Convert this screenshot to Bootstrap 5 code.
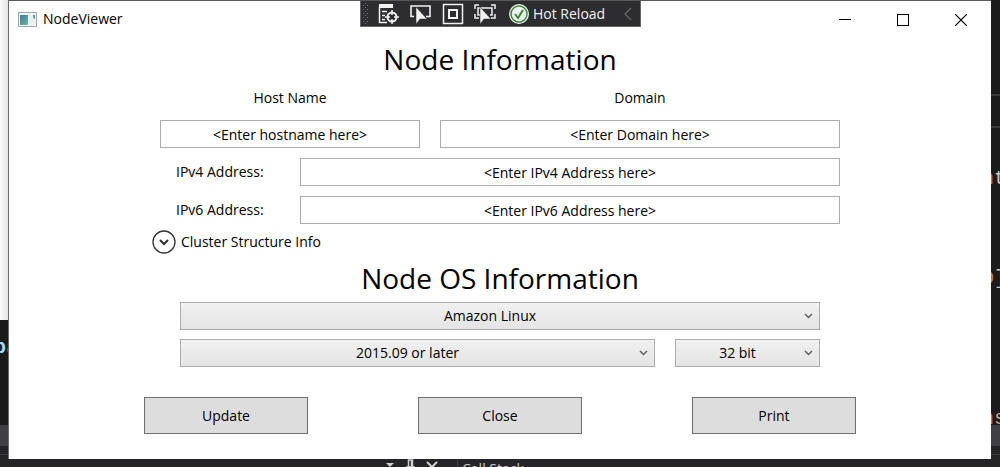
<!DOCTYPE html>
<html lang="en">
<head>
<meta charset="utf-8">
<meta name="viewport" content="width=device-width, initial-scale=1">
<title>NodeViewer</title>
<link rel="stylesheet" href="https://cdn.jsdelivr.net/npm/bootstrap@5.3.0/dist/css/bootstrap.min.css">
<style>
  body { font-family: "Open Sans", "Noto Sans", sans-serif; font-size: 14px; line-height: 20px; color: #000; background: #1b1b1c; }
  .desk { min-height: 100vh; padding: 0 9px 8px; }

  /* editor that shows around the window */
  .ide { inset: 0; font: 20px/24px "Liberation Mono", monospace; }
  .ide-edge { top: 0; bottom: 0; width: 12px; }
  .ide-edge i, .ide-edge b { position: absolute; font-style: normal; white-space: pre; }
  .ide-page { height: 320px; background: linear-gradient(90deg, #fafafa, #d8d8d8); }
  .ide-rule { left: 0; right: 0; height: 2px; background: #3a3a3b; }
  .ide-tabs { left: 0; right: 0; bottom: 21px; height: 21px; background: #3f3f44; }
  .ide-panel { left: 0; right: 0; bottom: 0; height: 21px; background: #252528; }
  .ide-panel::before { content: ""; position: absolute; left: 0; right: 0; top: 8px; border-top: 1px solid #3f3f46; }
  .ide-tools { left: 385px; top: 13px; color: #c8c8c8; font: 14px/20px "Open Sans", sans-serif; }
  .ide-title { border-left: 1px solid #3f3f46; padding-left: 4px; margin-left: 18px; }

  /* application window */
  .app { min-height: calc(100vh - 8px); background: #fff; border-top: 1px solid #59595b; box-shadow: -1px 0 #6b6b6b; }
  .titlebar { height: 36px; padding-left: 9px; padding-right: 1px; gap: 6px; }
  .titlebar .caption { width: 58px; height: 36px; border: 0; background: none; }
  .app h1 { font-size: 28px; line-height: 40px; font-weight: 400; padding-top: 2px; }
  .app h1.heading-os { line-height: 36px; padding: 0 0 6px; }
  .form-area { max-width: 680px; }
  .os-area { max-width: 640px; }
  .action-area { max-width: 712px; padding-top: 30px; }
  .col-label { height: 41px; padding-top: 9px; }
  .gap-field { gap: 10px; }
  .gap-select { gap: 9px; }
  .gap-col { column-gap: 20px; }
  .host-grid { display: grid; grid-template-columns: 13fr 20fr; }
  .addr-label { width: 140px; padding-left: 16px; }
  .field { height: 28px; padding: 0 4px; font-size: 14px; line-height: 20px; color: #000; background: #fff; border: 1px solid #abadb3; border-radius: 0; text-align: center; }
  select.field { appearance: none; padding: 0 20px 0 0; border-color: #acacac; text-align-last: center;
    background: url("data:image/svg+xml,%3Csvg xmlns='http://www.w3.org/2000/svg' width='9' height='6'%3E%3Cpath d='M1 1l3.500 3.500L8 1' fill='none' stroke='%23606060' stroke-width='1.500'/%3E%3C/svg%3E") no-repeat right 6px top 10px, linear-gradient(#f0f0f0, #e5e5e5); }
  .ver-grid { display: grid; grid-template-columns: 475fr 145fr; }
  .expander { max-width: 696px; }
  .expander button { border: 0; background: none; gap: 5px; height: 36px; color: #000; }
  .btn-win { width: 164px; height: 37px; padding: 0; font-size: 14px; line-height: 20px; color: #000; background: #ddd; border: 1px solid #707070; border-radius: 0; }

  /* debug toolbar over the title bar */
  .debugbar { top: 1px; left: 50%; width: 281px; height: 26px; margin-left: -140px; background: #2d2d30; border: 1px solid #66666a; border-top: 0; color: #f1f1f1; }
  .debugbar button { border: 0; padding: 0; background: none; color: inherit; line-height: 20px; }
</style>
</head>
<body>
<div class="desk position-relative overflow-hidden">

  <div class="ide position-absolute overflow-hidden" aria-hidden="true">
    <div class="ide-edge position-absolute start-0 overflow-hidden">
      <div class="ide-page"></div>
      <b style="top:336px;left:-6px;color:#9cdcfe">p</b>
      <b style="top:336px;left:6px;color:#3d62b0">a</b>
    </div>
    <div class="ide-edge position-absolute end-0 overflow-hidden">
      <div class="ide-rule position-absolute" style="top:94px"></div>
      <div class="ide-rule position-absolute" style="top:126px"></div>
      <i style="top:167px;left:-6px;color:#b5714f">n<span style="color:#c8c8c8">t</span></i>
      <i style="top:267px;left:-6px;color:#c08060">D<span style="color:#c8c8c8">]</span></i>
      <i style="top:407px;left:-6px;color:#b5714f">n<span style="color:#d69d85">s</span></i>
    </div>
    <div class="ide-tabs position-absolute"></div>
    <div class="ide-panel position-absolute">
      <div class="ide-tools position-absolute d-flex align-items-start">
        <svg width="54" height="14" fill="none" stroke="#d0d0d0"><path d="M1 4h8L5 8z" fill="#d0d0d0" stroke="none"/><path d="M23.500 8V1h4v7M26.500 1v7M21 8h9" stroke-width="1.500"/><path d="M42 3l10 10M52 3L42 13" stroke-width="2"/></svg>
        <span class="ide-title">Call Stack</span>
      </div>
    </div>
  </div>

  <main class="app position-relative">
    <header class="titlebar d-flex align-items-center">
      <svg width="19" height="15" viewBox="0 0 19 15"><defs><linearGradient id="pane" x2="1" y2="1"><stop stop-color="#3f73a8"/><stop offset="1" stop-color="#6cc08b"/></linearGradient></defs><path d="M.5.500h18v14H.5z" fill="#f5f7f9" stroke="#9aa4ad"/><path d="M2 3h8v10H2z" fill="url(#pane)"/><path d="M11 3h6v10h-6z" fill="#eee"/><path d="M15 3h2v4q-2 0-2-4z" fill="#4f9a93"/></svg>
      <span class="me-auto">NodeViewer</span>
      <div class="d-flex">
        <button class="caption" type="button" aria-label="Minimize"><svg width="12" height="12" shape-rendering="crispEdges"><path d="M0 5.500h12" stroke="#000"/></svg></button>
        <button class="caption" type="button" aria-label="Maximize"><svg width="12" height="12" shape-rendering="crispEdges"><path d="M.5.500h11v11H.5z" fill="none" stroke="#000"/></svg></button>
        <button class="caption" type="button" aria-label="Close window"><svg width="12" height="12"><path d="M0 0l12 12M12 0L0 12" stroke="#000" stroke-width="1.200"/></svg></button>
      </div>
    </header>

    <h1 class="text-center m-0">Node Information</h1>
    <div class="form-area mx-auto d-flex flex-column gap-field">
      <div class="host-grid gap-col text-center">
        <label class="col-label" for="host">Host Name</label>
        <label class="col-label" for="domain">Domain</label>
        <input class="field w-100" id="host" type="text" value="&lt;Enter hostname here&gt;">
        <input class="field w-100" id="domain" type="text" value="&lt;Enter Domain here&gt;">
      </div>
      <div class="d-flex align-items-center">
        <label class="addr-label flex-shrink-0" for="ip4">IPv4 Address:</label>
        <input class="field flex-fill" id="ip4" type="text" value="&lt;Enter IPv4 Address here&gt;">
      </div>
      <div class="d-flex align-items-center">
        <label class="addr-label flex-shrink-0" for="ip6">IPv6 Address:</label>
        <input class="field flex-fill" id="ip6" type="text" value="&lt;Enter IPv6 Address here&gt;">
      </div>
    </div>
    <div class="expander mx-auto">
      <button class="d-flex align-items-center p-0" type="button" aria-expanded="false">
        <svg width="24" height="24" fill="none" stroke="#333"><circle cx="12" cy="12" r="11" stroke-width="1.300"/><path d="M8 10l4 4 4-4" stroke-width="2.200"/></svg>
        Cluster Structure Info
      </button>
    </div>

    <h1 class="heading-os text-center m-0">Node OS Information</h1>
    <div class="os-area mx-auto d-flex flex-column gap-select">
      <select class="field w-100" aria-label="Operating system"><option>Amazon Linux</option></select>
      <div class="ver-grid gap-col">
        <select class="field w-100" aria-label="Version"><option>2015.09 or later</option></select>
        <select class="field w-100" aria-label="Architecture"><option>32 bit</option></select>
      </div>
    </div>
    <div class="action-area mx-auto d-flex justify-content-between">
      <button class="btn btn-win" type="button">Update</button>
      <button class="btn btn-win" type="button">Close</button>
      <button class="btn btn-win" type="button">Print</button>
    </div>
  </main>

  <div class="debugbar position-absolute d-flex align-items-center" role="toolbar" aria-label="Debug tools">
    <svg width="8" height="22" class="me-2"><defs><pattern id="grip" width="4" height="4" patternUnits="userSpaceOnUse"><path d="M0 0h1v1H0zM2 2h1v1H2z" fill="#77777b"/></pattern></defs><path d="M1 0h7v22H1z" fill="url(#grip)"/></svg>
    <button class="d-flex me-2" type="button" aria-label="Live Visual Tree"><svg width="24" height="22" fill="none" stroke="#f1f1f1"><path d="M2 1h14v4H2z" fill="#f1f1f1" stroke="none"/><path d="M2.500 4v16M2 19.500h8M5 8.500h5M5 12.500h3M5 16.500h3" stroke-width="1.500"/><circle cx="15" cy="14" r="4.500" stroke-width="2"/><path d="M15 7v5M15 16v5M8 14h5M17 14h5" stroke-width="1.500"/></svg></button>
    <button class="d-flex me-2" type="button" aria-label="Select Element"><svg width="24" height="22" fill="none" stroke="#f1f1f1"><path d="M5 13.500H2V3h19v10.500h-4" stroke-width="1.600"/><path d="M7 4v17l4-5h7z" fill="#f1f1f1" stroke="#2d2d30" stroke-width=".5"/></svg></button>
    <button class="d-flex me-2" type="button" aria-label="Display Layout Adorners"><svg width="24" height="22" fill="none" stroke="#f1f1f1"><path d="M2.500 1.500h19v19h-19z" stroke-width="1.500"/><path d="M8 7h8v8H8z" stroke-width="2"/></svg></button>
    <button class="d-flex me-2" type="button" aria-label="Track Focused Element"><svg width="24" height="22" fill="none" stroke="#f1f1f1"><path d="M2 6V2h4M18 2h4v4M2 11v4h4M18 15h4v-4M7 12H5V5h14v7h-2" stroke-width="1.500"/><path d="M7 4v17l4-5h7z" fill="#f1f1f1" stroke="#2d2d30" stroke-width=".5"/></svg></button>
    <button class="d-flex align-items-center" type="button"><svg width="20" height="20" fill="none" class="ms-1"><circle cx="10" cy="10" r="10" fill="#f1f1f1"/><circle cx="10" cy="10" r="8" stroke="#388a34" stroke-width="1.500"/><path d="M6 10l3 4 5-8" stroke="#388a34" stroke-width="2"/></svg><span class="text-nowrap ps-1">Hot Reload</span></button>
    <svg width="8" height="14" fill="none" class="ms-auto me-2"><path d="M7 1L1 7l6 6" stroke="#6a6a6e" stroke-width="1.200"/></svg>
  </div>
</div>
<script src="https://cdn.jsdelivr.net/npm/bootstrap@5.3.0/dist/js/bootstrap.bundle.min.js"></script>
</body>
</html>
